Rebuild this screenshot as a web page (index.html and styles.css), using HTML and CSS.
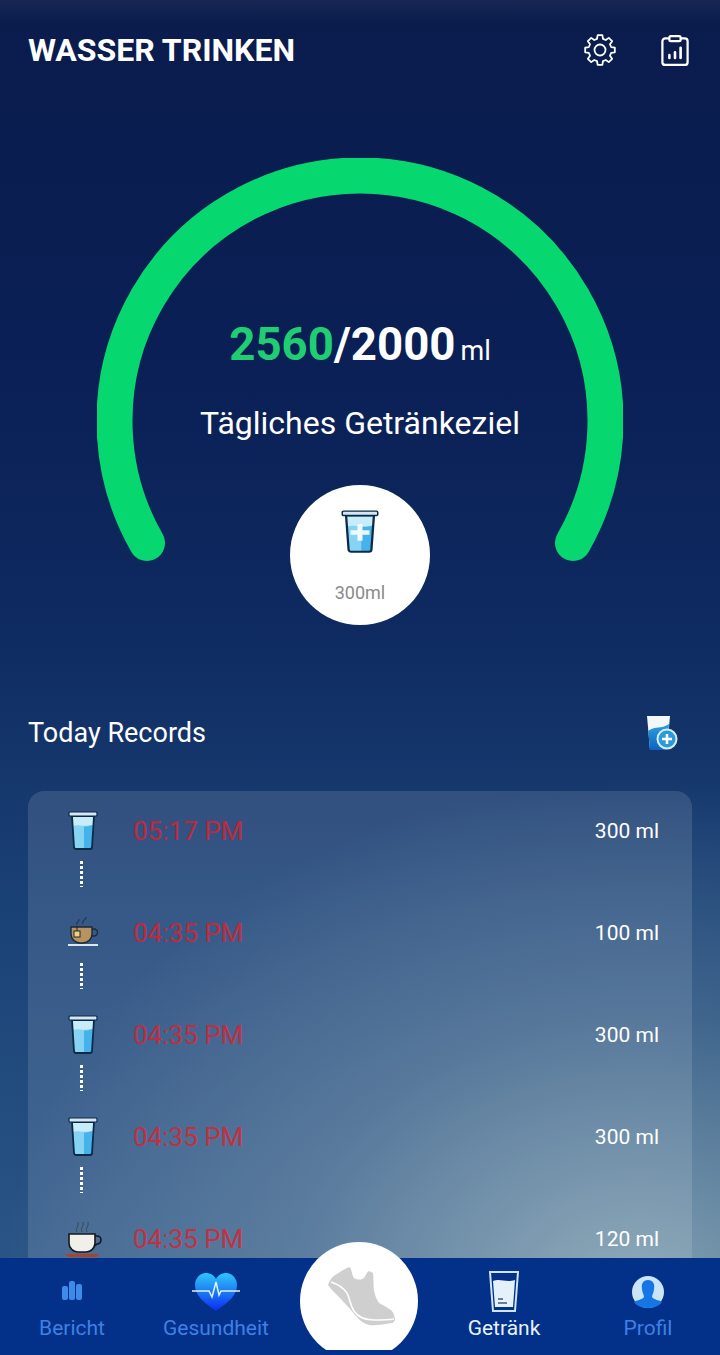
FILE: index.html
```html
<!DOCTYPE html>
<html lang="de">
<head>
    <meta charset="UTF-8">
    <meta name="viewport" content="width=device-width, initial-scale=1.0">
    <title>Wasser trinken</title>
    <link rel="stylesheet" href="styles.css">
</head>
<body>
    <svg class="defs" width="0" height="0">
        <defs>
            <symbol id="glass" viewBox="0 0 30 40" preserveAspectRatio="none">
                <path d="M4 5h22l-2 31a2 2 0 0 1-2 2H8a2 2 0 0 1-2-2z" fill="#c8ecfa"/>
                <path d="M4.800 15c6-2 8 1 20-1l-1.300 22a2 2 0 0 1-2 2H8a2 2 0 0 1-2-2z" fill="#86d3f4"/>
                <path d="M16 15.500c4 0 6-.6 8.800-1.500l-1.300 22a2 2 0 0 1-2 2H16z" fill="#46b2ea"/>
                <path d="M4 5h22l-2 31a2 2 0 0 1-2 2H8a2 2 0 0 1-2-2z" fill="none" stroke="#0b2a48" stroke-width="1.800"/>
                <rect x="1" y="1" width="28" height="4" rx="1" fill="#d5e7f2" stroke="#0b2a48" stroke-width="1.200"/>
            </symbol>
        </defs>
    </svg>
    <main class="page">
        <header class="top">
            <h1>WASSER TRINKEN</h1>
            <div class="top-icons">
                <svg class="gear" viewBox="-17 -17 34 34" fill="none" stroke="#fff" stroke-width="1.800" stroke-linejoin="round">
                    <circle r="5.500"/>
                    <polygon points="14.82,2.35 11.11,2.98 9.96,5.75 12.14,8.82 8.82,12.14 5.75,9.96 2.98,11.11 2.35,14.82 -2.35,14.82 -2.98,11.11 -5.75,9.96 -8.82,12.14 -12.14,8.82 -9.96,5.75 -11.11,2.98 -14.82,2.35 -14.82,-2.35 -11.11,-2.98 -9.96,-5.75 -12.14,-8.82 -8.82,-12.14 -5.75,-9.96 -2.98,-11.11 -2.35,-14.82 2.35,-14.82 2.98,-11.11 5.75,-9.96 8.82,-12.14 12.14,-8.82 9.96,-5.75 11.11,-2.98 14.82,-2.35"/>
                </svg>
                <svg class="report" viewBox="0 0 30 34" fill="none" stroke="#fff" stroke-width="2.400" stroke-linejoin="round">
                    <rect x="1.500" y="4" width="27" height="28.500" rx="3"/>
                    <rect x="9" y="1.500" width="12" height="5.500" rx="1.500" fill="#0a1d50"/>
                    <path d="M9 25v-3M15 25v-6M21 25V14" stroke-linecap="round" stroke-width="2.800"/>
                </svg>
            </div>
        </header>

        <section class="gauge">
            <svg class="ring" viewBox="0 0 526 404">
                <path d="M50 385A245.500 245.500 0 1 1 476 385" fill="none" stroke="#06d86f" stroke-width="36" stroke-linecap="round"/>
            </svg>
            <p class="amount"><span class="done">2560</span>/2000<small>ml</small></p>
            <p class="goal">Tägliches Getränkeziel</p>
            <button class="add">
                <svg class="add-glass" viewBox="0 0 30 40" preserveAspectRatio="none">
                    <use href="#glass"/>
                    <path d="M15 13v15M7.500 20.500h15" stroke="#fff" stroke-width="4" opacity=".9"/>
                </svg>
                <span>300ml</span>
            </button>
        </section>

        <section class="records-head">
            <h2>Today Records</h2>
            <svg class="add-record" viewBox="0 0 34 38">
                <defs>
                    <linearGradient id="rg" x1="0" y1="0" x2="0" y2="1">
                        <stop offset="0" stop-color="#2aa0e0"/>
                        <stop offset="1" stop-color="#0f62c0"/>
                    </linearGradient>
                </defs>
                <path d="M2 2h23l-3 34H5z" fill="#f2f7fb"/>
                <path d="M3.200 17c8-6 12-1 20.800-7l-2 26H5z" fill="url(#rg)"/>
                <circle cx="22" cy="25" r="9.500" fill="#2a9bd8" stroke="#d7eef9" stroke-width="2"/>
                <path d="M22 20v10M17 25h10" stroke="#fff" stroke-width="2.600"/>
            </svg>
        </section>

        <section class="records">
            <div class="rec">
                <div class="rec-mark">
                    <svg class="ico" viewBox="0 0 30 40"><use href="#glass"/></svg>
                    <i class="dots"></i>
                </div>
                <span class="time">05:17 PM</span>
                <span class="ml">300 ml</span>
            </div>
            <div class="rec">
                <div class="rec-mark">
                    <svg class="ico" viewBox="0 0 30 40">
                        <path d="M9 12c-2-3 3-3 2-6M15 11c-2-3 3-4 3-7" fill="none" stroke="#22384f" stroke-width="1.200"/>
                        <path d="M3 14h21v7a9 9 0 0 1-9 9h-3a9 9 0 0 1-9-9z" fill="#b8925f" stroke="#1b2a38" stroke-width="1.400"/>
                        <path d="M24 16h2a3 3 0 0 1 0 7h-3" fill="none" stroke="#1b2a38" stroke-width="1.400"/>
                        <path d="M9 13v5" stroke="#1b2a38"/>
                        <rect x="6" y="18" width="6" height="6" fill="#f1d27b" stroke="#1b2a38"/>
                        <path d="M0 32h30" stroke="#dce8f0" stroke-width="2"/>
                    </svg>
                    <i class="dots"></i>
                </div>
                <span class="time">04:35 PM</span>
                <span class="ml">100 ml</span>
            </div>
            <div class="rec">
                <div class="rec-mark">
                    <svg class="ico" viewBox="0 0 30 40"><use href="#glass"/></svg>
                    <i class="dots"></i>
                </div>
                <span class="time">04:35 PM</span>
                <span class="ml">300 ml</span>
            </div>
            <div class="rec">
                <div class="rec-mark">
                    <svg class="ico" viewBox="0 0 30 40"><use href="#glass"/></svg>
                    <i class="dots"></i>
                </div>
                <span class="time">04:35 PM</span>
                <span class="ml">300 ml</span>
            </div>
            <div class="rec">
                <div class="rec-mark">
                    <svg class="ico cup" viewBox="0 0 38 40">
                        <path d="M13 13c-2-4 2-5 1-10M18 13c-2-4 2-5 1-10M23 13c-2-4 2-5 1-10" fill="none" stroke="#3a4650" stroke-width="1"/>
                        <path d="M5 15h26v9a9 9 0 0 1-9 9h-8a9 9 0 0 1-9-9z" fill="#f1efea" stroke="#15181c" stroke-width="1.600"/>
                        <path d="M31 17h2a3.500 3.500 0 0 1 0 8l-3 2" fill="none" stroke="#15181c" stroke-width="1.600"/>
                        <path d="M0 35h36l-4 3H5z" fill="#a8442c"/>
                    </svg>
                </div>
                <span class="time">04:35 PM</span>
                <span class="ml">120 ml</span>
            </div>
        </section>

        <nav class="tabs">
            <a class="tab">
                <svg class="tab-ico" viewBox="0 0 44 44">
                    <rect x="12" y="16" width="6" height="14" rx="2" fill="#3d8be8"/>
                    <rect x="19" y="11" width="6" height="19" rx="2" fill="#3d8be8"/>
                    <rect x="26" y="14" width="6" height="16" rx="2" fill="#3d8be8"/>
                </svg>
                <span>Bericht</span>
            </a>
            <a class="tab">
                <svg class="tab-ico heart" viewBox="0 0 50 44">
                    <defs>
                        <linearGradient id="hg" x1="0" y1="0" x2="0" y2="1">
                            <stop offset="0" stop-color="#2fc6fa"/>
                            <stop offset="1" stop-color="#0a2cf0"/>
                        </linearGradient>
                    </defs>
                    <path d="M25 41C12 32 4 25 4 15 4 8 9 3 15 3c4 0 8 2 10 6 2-4 6-6 10-6 6 0 11 5 11 12 0 10-8 17-21 26z" fill="url(#hg)"/>
                    <path d="M1 21h17l3 6 4-15 3 13 2-4h19" fill="none" stroke="#dff3ff" stroke-width="1.500"/>
                </svg>
                <span>Gesundheit</span>
            </a>
            <div class="tab-run">
                <svg class="shoe" viewBox="0 0 68 60">
                    <path d="M0 18C2 12 5 9 9 7 13 4 18 1 22 0c2 4 2 8 4 11 4 2 7 2 10 0 2-3 3-6 5-7l4 2c1 6 0 12 1 18 1 5 3 9 5 12 5 3 10 5 13 8 2 3 3 6 3 9-1 2-2 3-3 3-8 1-16 3-23 2C33 56 27 48 22 42 16 35 10 29 4 23z" fill="#cfcfcf"/>
                    <path d="M3 15c6 2 12 5 16 11 3 6 3 12 7 18 4 6 12 9 20 9 6 0 13 0 20-1" fill="none" stroke="#fff" stroke-width="1.600"/>
                </svg>
            </div>
            <a class="tab on">
                <svg class="tab-ico" viewBox="0 0 34 44">
                    <path d="M3 2h28l-3 39H6z" fill="none" stroke="#cfe6fa" stroke-width="2"/>
                    <path d="M6 11c8-3 12 2 22-1l-2 27H8z" fill="#e4f1fb"/>
                    <path d="M11 29h5M11 33h9" stroke="#3a5a86" stroke-width="1.500"/>
                </svg>
                <span>Getränk</span>
            </a>
            <a class="tab">
                <svg class="tab-ico" viewBox="0 0 44 44">
                    <circle cx="22" cy="22" r="16" fill="#c9e6f9"/>
                    <path d="M22 10c-5 0-7 4-6 9 0 3 2 6 2 8-2 3-7 3-10 5 3 4 8 6 14 6s11-2 14-6c-3-2-8-2-10-5 0-2 2-5 2-8 1-5-1-9-6-9z" fill="#1676e6"/>
                </svg>
                <span>Profil</span>
            </a>
        </nav>
    </main>
</body>
</html>
```
FILE: styles.css
```css
* {
    box-sizing: border-box;
}

body {
    margin: 0;
    font-family: Roboto, "Liberation Sans", sans-serif;
    color: #fff;
}

.defs {
    position: absolute;
}

.page {
    width: 720px;
    height: 1355px;
    overflow: hidden;
    display: flex;
    flex-direction: column;
    background:
        linear-gradient(rgba(255, 255, 255, 0.05), rgba(255, 255, 255, 0) 24px),
        radial-gradient(ellipse 640px 520px at 640px 1300px, rgba(135, 165, 180, 0.95), rgba(90, 125, 155, 0.55) 55%, rgba(40, 80, 125, 0) 100%),
        linear-gradient(#0a1c4c 0, #0a1f55 350px, #0e2a60 620px, #1a4176 900px, #2f5a8a 1355px);
}

.top {
    height: 100px;
    padding: 0 31px 0 28px;
    display: flex;
    align-items: center;
    justify-content: space-between;
}

.top h1 {
    margin: 0;
    font-size: 32px;
    font-weight: 700;
}

.top-icons {
    display: flex;
    align-items: center;
    gap: 44px;
}

.gear {
    width: 34px;
    height: 34px;
}

.report {
    width: 28px;
    height: 33px;
}

.gauge {
    position: relative;
    height: 600px;
    padding-top: 216px;
    display: flex;
    flex-direction: column;
    align-items: center;
}

.ring {
    position: absolute;
    left: 97px;
    top: 58px;
    width: 526px;
    height: 404px;
}

.amount {
    position: relative;
    margin: 0;
    font-size: 45.6px;
    line-height: 58px;
    font-weight: 700;
}

.amount .done {
    color: #1fce72;
}

.amount small {
    margin-left: 5px;
    font-size: 27px;
    font-weight: 400;
}

.goal {
    margin: 24px 0 0;
    font-size: 32px;
    line-height: 38px;
}

.add {
    margin-top: 43px;
    width: 140px;
    height: 140px;
    padding: 25px 0 0;
    border: 0;
    border-radius: 50%;
    background: #fff;
    display: flex;
    flex-direction: column;
    align-items: center;
    position: relative;
}

.add-glass {
    width: 38px;
    height: 44px;
}

.add span {
    margin-top: 28px;
    font-family: Roboto, sans-serif;
    font-size: 18px;
    color: #8a8a8a;
}

.records-head {
    height: 91px;
    padding: 0 41px 26px 28px;
    display: flex;
    align-items: center;
    justify-content: space-between;
}

.records-head h2 {
    margin: 0;
    font-size: 27px;
    font-weight: 400;
}

.add-record {
    width: 34px;
    height: 38px;
}

.records {
    flex: 1;
    min-height: 0;
    margin: 0 28px;
    padding-top: 20px;
    overflow: hidden;
    border-radius: 16px 16px 0 0;
    background: rgba(255, 255, 255, 0.12);
}

.rec {
    height: 102px;
    padding-right: 33px;
    display: grid;
    grid-template-columns: 105px 1fr auto;
    align-items: start;
}

.rec-mark {
    display: flex;
    flex-direction: column;
    align-items: center;
    gap: 10px;
    padding-left: 1px;
}

.ico {
    width: 30px;
    height: 40px;
    margin-left: 4px;
}

.ico.cup {
    width: 38px;
}

.dots {
    width: 3px;
    height: 26px;
    background: repeating-linear-gradient(#fff 0 3px, transparent 3px 5px);
}

.time {
    font-size: 26px;
    line-height: 40px;
    color: rgba(226, 30, 42, 0.8);
}

.ml {
    font-size: 21px;
    line-height: 40px;
}

.tabs {
    position: relative;
    flex: none;
    height: 97px;
    display: grid;
    grid-template-columns: repeat(5, 1fr);
    background: #033088;
}

.tab {
    padding-top: 12px;
    display: flex;
    flex-direction: column;
    align-items: center;
    font-size: 21px;
    color: #3c82e4;
}

.tab.on {
    color: #e6f2fc;
}

.tab-ico {
    width: 44px;
    height: 44px;
    margin-bottom: 2px;
}

.heart {
    width: 50px;
}

.tab-run {
    position: relative;
}

.shoe {
    position: absolute;
    left: 40px;
    top: 9px;
    width: 68px;
    height: 60px;
    z-index: 1;
}

.tab-run::before {
    content: "";
    position: absolute;
    left: 12px;
    top: -16px;
    width: 118px;
    height: 118px;
    border-radius: 50%;
    background: #fff;
    clip-path: inset(0 0 10px 0);
}
```
